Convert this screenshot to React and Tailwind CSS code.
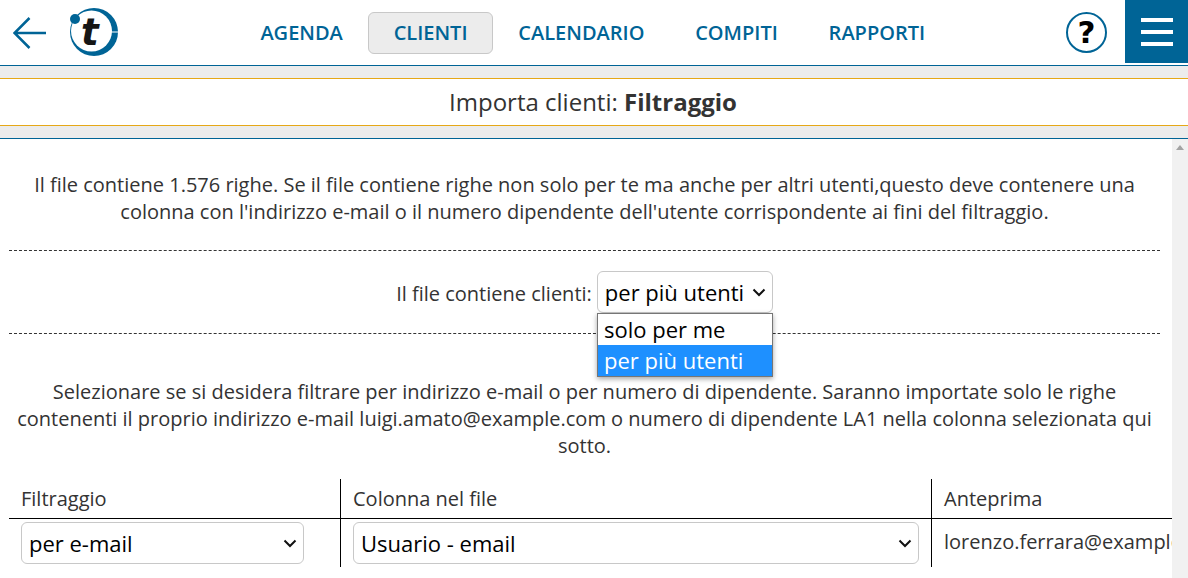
import { useState } from "react";

const navItems = ["AGENDA", "CLIENTI", "CALENDARIO", "COMPITI", "RAPPORTI"];

function Chevron() {
  return (
    <svg width="14" height="9" viewBox="0 0 14 9" fill="none" className="shrink-0">
      <path d="M1.5 1.5 7 7l5.5-5.5" stroke="#111" strokeWidth="2" />
    </svg>
  );
}

function FakeSelect({ value, className }) {
  return (
    <div
      className={`h-[42px] flex items-center justify-between pl-[7px] pr-[6px] bg-white border border-[#c8c8c8] rounded-[6px] text-[22px] text-black ${className}`}
    >
      <span className="whitespace-nowrap">{value}</span>
      <Chevron />
    </div>
  );
}

function Logo() {
  return (
    <svg width="50" height="50" viewBox="0 0 50 50">
      <circle cx="25" cy="25" r="24" fill="#006496" />
      <circle cx="22.500" cy="24" r="20.500" fill="#fff" />
      <rect x="39" y="24.500" width="11" height="1" fill="#fff" />
      <circle cx="6" cy="12" r="5" fill="#006496" />
      <text
        x="12"
        y="38"
        fontFamily="'DejaVu Sans', sans-serif"
        fontSize="37"
        fontWeight="700"
        fontStyle="italic"
        fill="#161616"
      >
        t
      </text>
    </svg>
  );
}

export default function App() {
  const [active] = useState("CLIENTI");

  return (
    <div className="w-[1188px] h-[578px] overflow-hidden bg-white flex flex-col font-['Open_Sans',sans-serif] text-[20px] leading-[27px] text-[#333]">
      {/* header */}
      <header className="h-[66px] shrink-0 flex border-b border-[#006496]">
        <div className="w-[235px] flex items-center">
          <svg width="34" height="32" viewBox="0 0 34 32" fill="none" className="ml-[13px]">
            <path d="M16.500 1 1.500 16l15 15M1.500 16H33" stroke="#006496" strokeWidth="2.500" />
          </svg>
          <div className="ml-[22px] -mt-[2px]">
            <Logo />
          </div>
        </div>
        <nav className="flex items-center">
          {navItems.map((item) => (
            <div
              key={item}
              className={`h-[42px] px-[24.4px] flex items-center rounded-[6px] border text-[20px] font-semibold text-[#006496] ${
                item === active ? "bg-[#ececec] border-[#c8c8c8]" : "border-transparent"
              }`}
            >
              {item}
            </div>
          ))}
        </nav>
        <div className="ml-auto flex">
          <div className="w-[41px] h-[41px] mt-[12px] mr-[18px] rounded-full border-[2px] border-[#006496] flex items-center justify-center font-['DejaVu_Sans',sans-serif] text-[31px] font-bold text-black leading-none">
            ?
          </div>
          <div className="w-[63px] h-[63px] bg-[#006496] flex flex-col items-center justify-center gap-[8px]">
            <div className="w-[32px] h-[4px] bg-white" />
            <div className="w-[32px] h-[4px] bg-white" />
            <div className="w-[32px] h-[4px] bg-white" />
          </div>
        </div>
      </header>

      {/* title band */}
      <div className="h-[12px] shrink-0 bg-[#ececec]" />
      <div className="h-[48px] shrink-0 flex items-center justify-center border-y border-[#e6a817] text-[24px] pb-[2px] pr-[2px]">
        <span>
          Importa clienti: <b className="font-bold">Filtraggio</b>
        </span>
      </div>
      <div className="h-[13px] shrink-0 bg-[#ececec] border-b border-[#006496]" />

      {/* content + scrollbar */}
      <div className="flex-1 min-h-0 flex">
        <main className="w-[1172px] shrink-0 overflow-hidden pl-[9px] pr-[12px]">
          <p className="mt-[32px] px-[16px] text-center">
            Il file contiene 1.576 righe. Se il file contiene righe non solo per te ma anche per altri utenti,questo deve contenere una colonna con l'indirizzo e-mail o il numero dipendente dell'utente corrispondente ai fini del filtraggio.
          </p>
          <div className="mt-[25px] border-t border-dashed border-[#333]" />
          <div className="relative h-[83px] flex items-center justify-center border-b border-dashed border-[#333]">
            <span className="mr-[5px] mt-[2px]">Il file contiene clienti:</span>
            <FakeSelect value="per più utenti" className="w-[176px]" />
            {/* open list */}
            <div className="absolute left-[588px] top-[62px] w-[176px] bg-white border border-[#767676] shadow-[0_2px_5px_rgba(0,0,0,0.35)] text-[22px] leading-[31px] text-black z-10">
              <div className="pl-[6px] h-[31px]">solo per me</div>
              <div className="pl-[6px] h-[31px] bg-[#1e90ff] text-white">per più utenti</div>
            </div>
          </div>
          <p className="mt-[44px] text-center">
            Selezionare se si desidera filtrare per indirizzo e-mail o per numero di dipendente. Saranno importate solo le righe contenenti il proprio indirizzo e-mail luigi.amato@example.com o numero di dipendente LA1 nella colonna selezionata qui sotto.
          </p>

          <div className="mt-[20px] w-[1163px] grid grid-cols-[331px_591px_241px]">
            <div className="h-[40px] border-b border-black pl-[12px] pt-[6px]">Filtraggio</div>
            <div className="h-[40px] border-b border-l border-black pl-[12px] pt-[6px]">Colonna nel file</div>
            <div className="h-[40px] border-b border-l border-black pl-[12px] pt-[6px]">Anteprima</div>
            <div className="h-[48px] pl-[12px] pt-[3px] pr-[36px]">
              <FakeSelect value="per e-mail" className="w-[283px]" />
            </div>
            <div className="h-[48px] border-l border-black pl-[12px] pt-[3px]">
              <FakeSelect value="Usuario - email" className="w-[566px]" />
            </div>
            <div className="h-[48px] border-l border-black pl-[12px] pt-[9px] whitespace-nowrap overflow-hidden">
              lorenzo.ferrara@example.com
            </div>
          </div>
        </main>
        <div className="w-[16px] shrink-0 bg-[#f1f1f1] flex justify-center pt-[6px]">
          <div className="w-0 h-0 border-x-[4px] border-x-transparent border-b-[5px] border-b-[#a3a3a3]" />
        </div>
      </div>
    </div>
  );
}
